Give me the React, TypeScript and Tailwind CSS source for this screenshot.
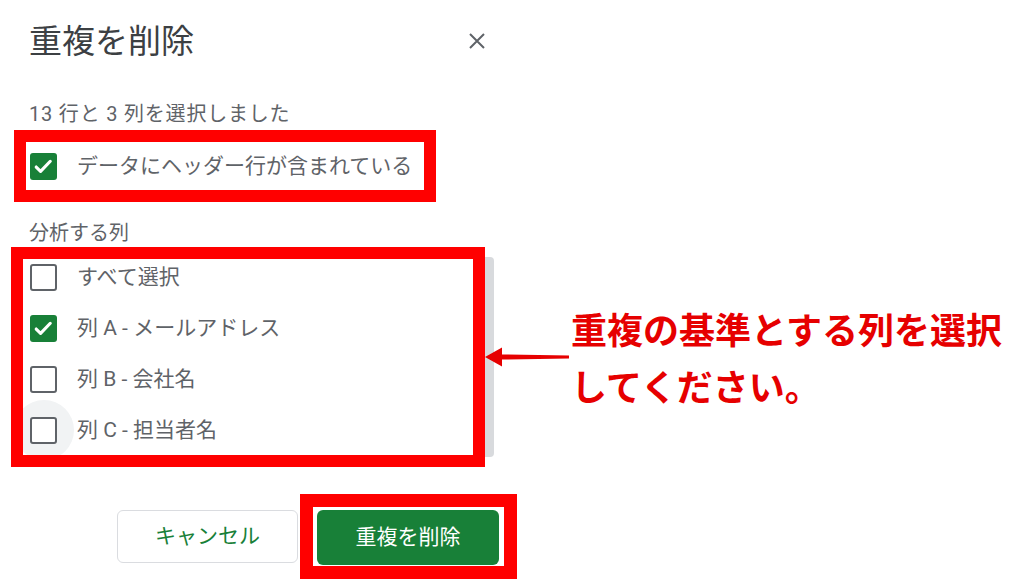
import { useState } from 'react'

const FONT = 'font-["Roboto","Noto_Sans_CJK_JP",sans-serif]'

const COLUMNS = [
  { label: 'すべて選択', checked: false },
  { label: '列 A - メールアドレス', checked: true },
  { label: '列 B - 会社名', checked: false },
  { label: '列 C - 担当者名', checked: false, hover: true },
]

function Checkbox({ checked }: { checked: boolean }) {
  if (checked) {
    return (
      <span className="flex h-[27px] w-[27px] shrink-0 items-center justify-center rounded-[3px] bg-[#188038]">
        <svg viewBox="0 0 24 24" className="h-[25px] w-[25px]" fill="none" stroke="white" strokeWidth="3" strokeLinecap="round" strokeLinejoin="round">
          <path d="M5 12.5l4.2 4.2 9.3-9.7" />
        </svg>
      </span>
    )
  }
  return <span className="block h-[27px] w-[27px] shrink-0 rounded-[3px] border-[2.5px] border-[#5f6368] bg-white" />
}

export default function App() {
  const [cols, setCols] = useState(COLUMNS)
  const [header, setHeader] = useState(true)

  return (
    <div className={`h-[588px] w-[1024px] overflow-hidden bg-white ${FONT}`}>
      <div className="flex flex-col">
        {/* header */}
        <div className="ml-[29px] mt-[24px] flex h-[36px] w-[457px] items-center justify-between">
          <h1 className="text-[33px] leading-[36px] text-[#3c4043]">重複を削除</h1>
          <svg viewBox="0 0 18 18" className="-mt-[2px] h-[18px] w-[18px]" stroke="#5f6368" strokeWidth="2">
            <path d="M2 2l14 14M16 2L2 16" />
          </svg>
        </div>

        <p className="ml-[29px] mt-[42px] text-[20px] leading-[24px] tracking-[0.8px] text-[#5f6368]">13 行と 3 列を選択しました</p>

        {/* header row checkbox */}
        <div className="ml-[14px] mt-[4px] flex h-[72px] w-[422px] items-center border-[12px] border-[#f00] pl-[4px]">
          <button onClick={() => setHeader(!header)} className="flex items-center gap-[20px]">
            <Checkbox checked={header} />
            <span className="text-[21px] leading-[24px] text-[#5f6368]">データにヘッダー行が含まれている</span>
          </button>
        </div>

        <p className="ml-[29px] mt-[19px] text-[20px] leading-[24px] text-[#5f6368]">分析する列</p>

        {/* column list + callout */}
        <div className="ml-[11px] mt-[2px] flex items-center">
          <div className="h-[220px] w-[474px] overflow-hidden border-[12px] border-[#f00] bg-white">
            <div className="flex flex-col gap-[15px] pl-[7px]">
              {cols.map((c, i) => (
                <button
                  key={c.label}
                  onClick={() => setCols(cols.map((x, j) => (j === i ? { ...x, checked: !x.checked } : x)))}
                  className="flex h-[36px] items-center gap-[20px]"
                >
                  <span className="relative flex shrink-0">
                    {c.hover && <span className="absolute left-1/2 top-1/2 h-[60px] w-[60px] -translate-x-1/2 -translate-y-1/2 rounded-full bg-[#f1f3f4]" />}
                    <span className="relative flex">
                      <Checkbox checked={c.checked} />
                    </span>
                  </span>
                  <span className="text-[21px] leading-[24px] text-[#5f6368]">{c.label}</span>
                </button>
              ))}
            </div>
          </div>
          <div className="h-[200px] w-[9px] rounded-r-[4px] bg-[#d8dadd]" />
          <svg viewBox="0 0 84 22" className="-ml-[9px] h-[22px] w-[84px] shrink-0">
            <path d="M0 11L17 1.5V8.5L84 9.5V12.5L17 13.5V20.5Z" fill="#e60000" />
          </svg>
          <p className="ml-[2px] font-['Noto_Sans_CJK_JP',sans-serif] text-[36px] font-bold leading-[57px] text-[#e60000]">
            重複の基準とする列を選択
            <br />
            してください。
          </p>
        </div>

        {/* footer buttons */}
        <div className="ml-[117px] mt-[27px] flex items-center gap-[2px]">
          <button className="h-[53px] w-[181px] rounded-[6px] border border-[#dadce0] bg-white text-[21px] text-[#188038]">キャンセル</button>
          <div className="h-[85px] w-[217px] border-[13px] border-[#f00] px-[4px] pt-[3px]">
            <button className="h-[55px] w-[182px] rounded-[6px] bg-[#188038] text-[21px] text-white">重複を削除</button>
          </div>
        </div>
      </div>
    </div>
  )
}
